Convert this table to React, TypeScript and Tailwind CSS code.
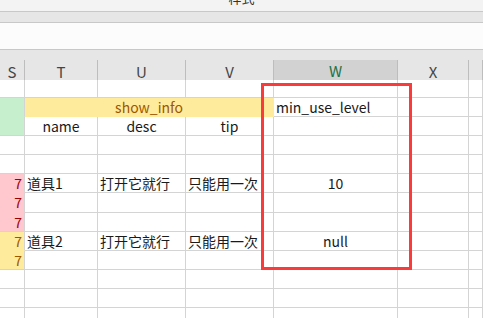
import React from 'react';

const cols = ['S', 'T', 'U', 'V', 'W', 'X', ''];
const gridCols = 'grid grid-cols-[25px_73px_88px_88px_124px_71px_1fr]';

type Cell = {
  text?: string;
  fill?: string; // bg + border colour classes
  align?: 'left' | 'center' | 'right';
  color?: string;
  span?: number;
};

const empty: Cell = {};

// one entry per sheet row, cells from S to the last partial column
const rows: { h: string; cells: Cell[] }[] = [
  { h: 'h-[18px]', cells: [empty, empty, empty, empty, empty, empty, empty] },
  {
    h: 'h-[19px]',
    cells: [
      { fill: 'bg-[#c6efce] border-b-[#c6efce]' },
      { text: 'show_info', fill: 'bg-[#ffeb9c] border-b-[#ffeb9c] border-r-[#ffeb9c]', align: 'center', color: 'text-[#9c5700]', span: 3 },
      { text: 'min_use_level', align: 'left' },
      empty,
      empty,
    ],
  },
  {
    h: 'h-[19px]',
    cells: [
      { fill: 'bg-[#c6efce]' },
      { text: 'name', align: 'center' },
      { text: 'desc', align: 'center' },
      { text: 'tip', align: 'center' },
      empty,
      empty,
      empty,
    ],
  },
  { h: 'h-[19px]', cells: [empty, empty, empty, empty, empty, empty, empty] },
  { h: 'h-[19px]', cells: [empty, empty, empty, empty, empty, empty, empty] },
  {
    h: 'h-[19px]',
    cells: [
      { text: '7', fill: 'bg-[#ffc7ce] border-b-[#ffc7ce]', align: 'right', color: 'text-[#9c0006]' },
      { text: '道具1' },
      { text: '打开它就行' },
      { text: '只能用一次' },
      { text: '10', align: 'center' },
      empty,
      empty,
    ],
  },
  {
    h: 'h-[20px]',
    cells: [
      { text: '7', fill: 'bg-[#ffc7ce] border-b-[#ffc7ce]', align: 'right', color: 'text-[#9c0006]' },
      empty, empty, empty, empty, empty, empty,
    ],
  },
  {
    h: 'h-[19px]',
    cells: [
      { text: '7', fill: 'bg-[#ffc7ce]', align: 'right', color: 'text-[#9c0006]' },
      empty, empty, empty, empty, empty, empty,
    ],
  },
  {
    h: 'h-[19px]',
    cells: [
      { text: '7', fill: 'bg-[#ffeb9c] border-b-[#ffeb9c]', align: 'right', color: 'text-[#9c5700]' },
      { text: '道具2' },
      { text: '打开它就行' },
      { text: '只能用一次' },
      { text: 'null', align: 'center' },
      empty,
      empty,
    ],
  },
  {
    h: 'h-[19px]',
    cells: [
      { text: '7', fill: 'bg-[#ffeb9c]', align: 'right', color: 'text-[#9c5700]' },
      empty, empty, empty, empty, empty, empty,
    ],
  },
  { h: 'h-[19px]', cells: [empty, empty, empty, empty, empty, empty, empty] },
  { h: 'h-[19px]', cells: [empty, empty, empty, empty, empty, empty, empty] },
  { h: 'h-[19px]', cells: [empty, empty, empty, empty, empty, empty, empty] },
];

function SheetCell({ cell }: { cell: Cell }) {
  const justify =
    cell.align === 'center' ? 'justify-center' : cell.align === 'right' ? 'justify-end pr-[2px]' : 'justify-start pl-[2px]';
  return (
    <div
      className={`flex items-center overflow-hidden whitespace-nowrap border-b border-r border-[#d4d4d4] ${justify} ${
        cell.fill ?? 'bg-white'
      } ${cell.color ?? 'text-[#1a1a1a]'} ${cell.span === 3 ? 'col-span-3' : ''}`}
    >
      {cell.text}
    </div>
  );
}

export default function App() {
  return (
    <div
      className="relative h-[318px] w-[483px] overflow-hidden bg-white text-[14px]"
      style={{ fontFamily: '"Noto Sans CJK SC", "Noto Sans", sans-serif' }}
    >
      {/* 标题栏，只露出下半截 */}
      <div className="flex h-[12px] justify-center overflow-hidden border-b border-[#c8c8c8] bg-[#f3f3f3]">
        <span className="mt-[-10px] text-[13px] leading-[16px] text-[#333]">样式</span>
      </div>
      <div className="h-[11px] border-b border-[#c8c8c8] bg-[#e6e6e6]" />
      <div className="h-[27px] border-b border-[#c8c8c8] bg-[#fcfcfc]" />

      {/* 列标题 */}
      <div className="h-[10px] bg-[#e6e6e6]" />
      <div className={`${gridCols} h-[20px] bg-[#e6e6e6] text-[15px] text-[#444]`}>
        {cols.map((c, i) =>
          c === 'W' ? (
            <div
              key={i}
              className="flex items-center justify-center border-b-2 border-r border-b-[#217346] border-r-[#bdbdbd] bg-[#d2d2d2] text-[#217346]"
            >
              {c}
            </div>
          ) : (
            <div key={i} className="flex items-center justify-center border-b border-r border-[#bdbdbd]">
              {c}
            </div>
          )
        )}
      </div>

      {/* 单元格 */}
      {rows.map((r, ri) => (
        <div key={ri} className={`${gridCols} ${r.h}`}>
          {r.cells.map((cell, ci) => (
            <SheetCell key={ci} cell={cell} />
          ))}
        </div>
      ))}

      {/* 红框标注 */}
      <div className="pointer-events-none absolute left-[261px] top-[83px] h-[187px] w-[151px] border-[3px] border-[#fb3b3b]" />
    </div>
  );
}
